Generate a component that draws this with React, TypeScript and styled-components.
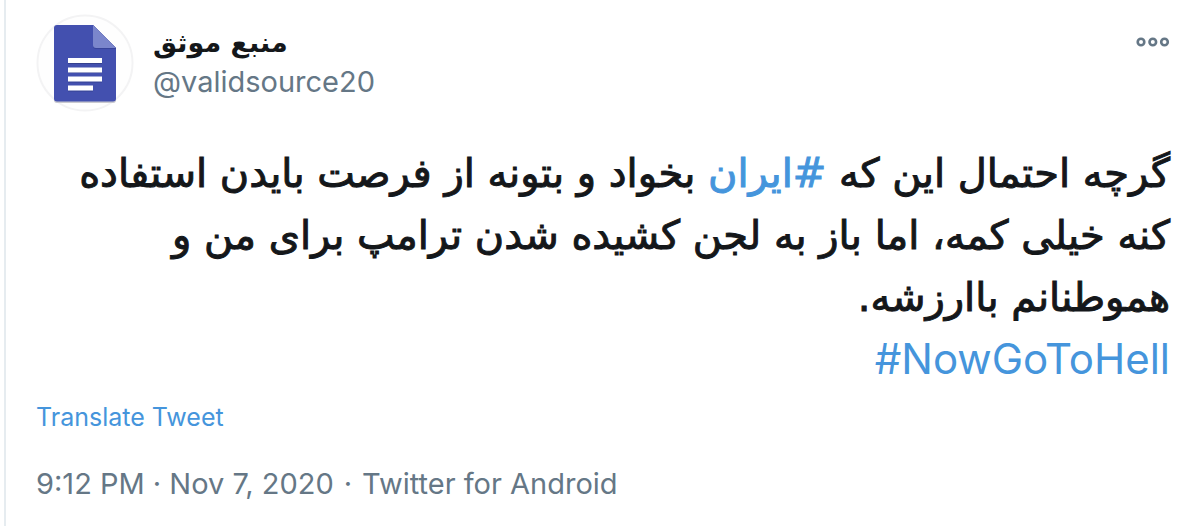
import React from "react";
import styled, { createGlobalStyle } from "styled-components";

const GlobalStyle = createGlobalStyle`
  * { box-sizing: border-box; }
  body {
    margin: 0;
    background: #ffffff;
    font-family: Inter, "DejaVu Sans", sans-serif;
    color: #14171a;
  }
`;

const Tweet = styled.article`
  margin-left: 4px;
  padding: 14px 32px 24px 30px;
  border-left: 2px solid #e6ecf0;
`;

const Header = styled.header`
  display: flex;
  align-items: flex-start;
  gap: 19px;
`;

const Avatar = styled.a`
  flex: none;
  display: block;
  width: 98px;
  height: 98px;
  svg { display: block; }
`;

const Author = styled.div`
  flex: 1;
  display: flex;
  flex-direction: column;
  align-items: flex-start;
  padding-top: 10px;
`;

const Name = styled.a`
  font-family: "DejaVu Sans", sans-serif;
  font-size: 27px;
  line-height: 38px;
  font-weight: 700;
  color: #14171a;
  text-decoration: none;
`;

const Handle = styled.span`
  font-size: 29px;
  line-height: 40px;
  color: #657786;
`;

const MoreButton = styled.button`
  display: block;
  margin-top: 20px;
  padding: 0;
  border: 0;
  background: none;
  cursor: pointer;
  svg { display: block; }
`;

const Body = styled.p`
  margin: 30px 0 0;
  text-align: right;
  font-family: "DejaVu Sans", sans-serif;
  font-size: 40px;
  line-height: 62px;
  white-space: nowrap;
  -webkit-text-stroke: 1px currentColor;
`;

const Hashtag = styled.a<{ $latin?: boolean }>`
  color: #4595dc;
  text-decoration: none;
  ${(p) =>
    p.$latin &&
    "font-family: Inter, sans-serif; font-size: 42px; -webkit-text-stroke: 0;"}
`;

const Translate = styled.button`
  display: block;
  margin-top: 10px;
  padding: 0;
  border: 0;
  background: none;
  font-family: Inter, sans-serif;
  font-size: 25px;
  line-height: 32px;
  color: #4595dc;
  cursor: pointer;
`;

const Meta = styled.footer`
  display: flex;
  flex-wrap: wrap;
  gap: 10px;
  margin-top: 32px;
  font-size: 29px;
  line-height: 38px;
  color: #657786;
`;

const MetaLink = styled.a`
  color: inherit;
  text-decoration: none;
`;

function DocumentAvatar() {
  return (
    <svg width="98" height="98" viewBox="0 0 98 98" aria-hidden="true">
      <circle cx="49" cy="49" r="47.5" fill="#fefefe" stroke="#f3f3f4" strokeWidth="2" />
      <path d="M21 12h36l23 23v51a3 3 0 0 1-3 3H21a3 3 0 0 1-3-3V15a3 3 0 0 1 3-3z" fill="#c9c9cf" />
      <path d="M21 11h36l23 23v50.500a3 3 0 0 1-3 3H21a3 3 0 0 1-3-3V14a3 3 0 0 1 3-3z" fill="#4350af" />
      <path d="M57 11l23 23v1H60a3 3 0 0 1-3-3z" fill="#38449a" />
      <path d="M57 11l23 23H60a3 3 0 0 1-3-3z" fill="#7b86cc" />
      <path d="M32 49h34v1H32zM32 58h34v1H32zM32 67.500h34v1H32zM32 76.500h25v1H32z" fill="#35408f" />
      <path d="M32 44h34v5H32zM32 53.500h34v5H32zM32 62.500h34v5H32zM32 71.500h25v5H32z" fill="#ffffff" />
    </svg>
  );
}

function MoreIcon() {
  return (
    <svg width="34" height="16" viewBox="0 0 34 16" aria-hidden="true" fill="none" stroke="#657786" strokeWidth="2.600">
      <circle cx="5" cy="8" r="3.300" />
      <circle cx="16.800" cy="8" r="3.300" />
      <circle cx="28.500" cy="8" r="3.300" />
    </svg>
  );
}

export default function App() {
  return (
    <>
      <GlobalStyle />
      <Tweet>
        <Header>
          <Avatar href="#profile" aria-label="منبع موثق">
            <DocumentAvatar />
          </Avatar>
          <Author>
            <Name href="#profile" dir="rtl" lang="fa">منبع موثق</Name>
            <Handle>@validsource20</Handle>
          </Author>
          <MoreButton type="button" aria-label="More">
            <MoreIcon />
          </MoreButton>
        </Header>
        <Body dir="rtl" lang="fa">
          گرچه احتمال این که <Hashtag href="#iran">#ایران</Hashtag> بخواد و بتونه از فرصت بایدن استفاده
          <br />
          کنه خیلی کمه، اما باز به لجن کشیده شدن ترامپ برای من و
          <br />
          هموطنانم باارزشه.
          <br />
          <Hashtag href="#nowgotohell" $latin dir="ltr" lang="en">#NowGoToHell</Hashtag>
        </Body>
        <Translate type="button">Translate Tweet</Translate>
        <Meta>
          <MetaLink href="#status">9:12 PM · Nov 7, 2020</MetaLink>
          <span>·</span>
          <MetaLink href="#source">Twitter for Android</MetaLink>
        </Meta>
      </Tweet>
    </>
  );
}
